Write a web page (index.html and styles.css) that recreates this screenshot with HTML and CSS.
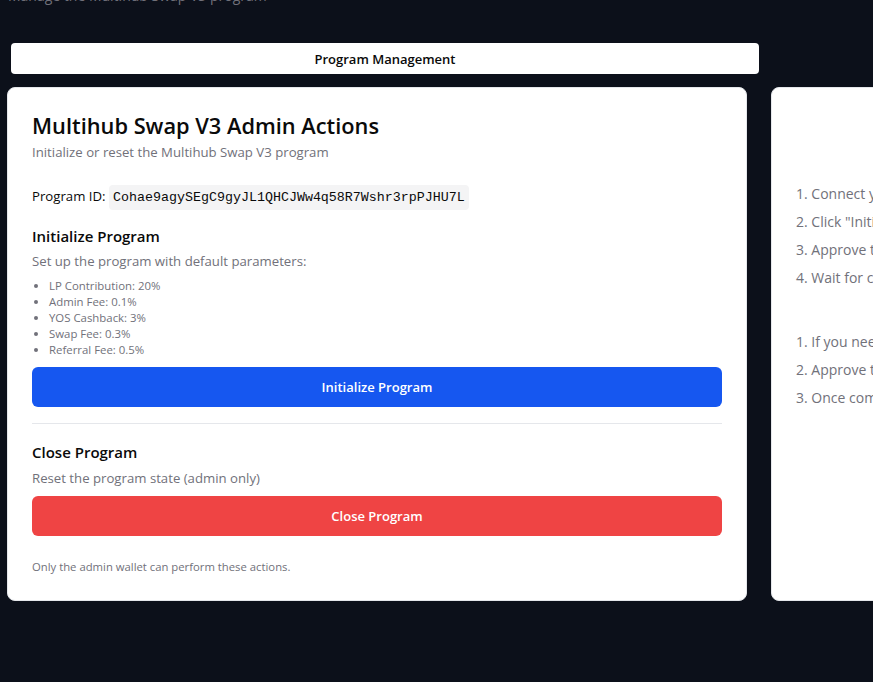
FILE: index.html
```html
<!DOCTYPE html>
<html lang="en">
<head>
<meta charset="utf-8">
<title>Multihub Swap V3 Admin</title>
<link rel="stylesheet" href="styles.css">
</head>
<body>
<div class="page">
  <p class="page-sub">Manage the Multihub Swap V3 program</p>
  <div class="tabs-list">
    <div class="tab active">Program Management</div>
  </div>
  <div class="grid">
    <section class="card">
      <h2 class="card-title">Multihub Swap V3 Admin Actions</h2>
      <p class="card-desc">Initialize or reset the Multihub Swap V3 program</p>
      <p class="pid">Program ID: <code class="code">Cohae9agySEgC9gyJL1QHCJWw4q58R7Wshr3rpPJHU7L</code></p>
      <h3 class="sec-title first">Initialize Program</h3>
      <p class="sec-desc">Set up the program with default parameters:</p>
      <ul class="params">
        <li>LP Contribution: 20%</li>
        <li>Admin Fee: 0.1%</li>
        <li>YOS Cashback: 3%</li>
        <li>Swap Fee: 0.3%</li>
        <li>Referral Fee: 0.5%</li>
      </ul>
      <button class="btn btn-blue">Initialize Program</button>
      <hr class="divider">
      <h3 class="sec-title">Close Program</h3>
      <p class="sec-desc close">Reset the program state (admin only)</p>
      <button class="btn btn-red">Close Program</button>
      <p class="foot">Only the admin wallet can perform these actions.</p>
    </section>
    <section class="card">
      <h2 class="card-title center">Instructions</h2>
      <p class="card-desc center">How to manage the program</p>
      <ol class="steps">
        <li>1. Connect your admin wallet</li>
        <li>2. Click "Initialize Program" to set up the program</li>
        <li>3. Approve the transaction in your wallet</li>
        <li>4. Wait for confirmation</li>
      </ol>
      <h4 class="steps-title">Closing the Program</h4>
      <ol class="steps next">
        <li>1. If you need to reset, click "Close Program"</li>
        <li>2. Approve the transaction in your wallet</li>
        <li>3. Once complete, you can initialize again</li>
      </ol>
    </section>
  </div>
</div>
</body>
</html>
```
FILE: styles.css
```css
* { box-sizing: border-box; }
html, body { margin: 0; padding: 0; }
body {
  background: #0c101a;
  font-family: "Open Sans", "Noto Sans", sans-serif;
  overflow: hidden;
  width: 873px;
  height: 682px;
}
.page { padding-left: 7px; width: 1600px; }
.page-sub {
  margin: -14px 0 0 1px;
  font-size: 14px;
  line-height: 20px;
  color: #71717a;
}
.tabs-list {
  margin-top: 33px;
  width: 756px;
  padding: 4px;
  display: flex;
}
.tab {
  flex: 1;
  height: 31px;
  background: #fff;
  border-radius: 4px;
  display: flex;
  align-items: center;
  justify-content: center;
  font-size: 13px;
  font-weight: 600;
  color: #0a0a0a;
}
.grid {
  margin-top: 9px;
  display: grid;
  grid-template-columns: 740px 740px;
  gap: 24px;
}
.card {
  background: #fff;
  border: 1px solid #e5e7eb;
  border-radius: 8px;
  padding: 24px;
  height: 514px;
  color: #0a0a0a;
}
.card-title {
  margin: 0;
  font-size: 21.8px;
  line-height: 27px;
  font-weight: 600;
}
.card-desc {
  margin: 3px 0 0;
  font-size: 13.2px;
  line-height: 20px;
  color: #71717a;
}
.center { text-align: center; }
.pid {
  margin: 22px 0 0;
  font-size: 13.2px;
  line-height: 25px;
}
.code {
  display: inline-block;
  font-family: "Liberation Mono", monospace;
  font-size: 13.33px;
  background: #f4f4f5;
  border-radius: 4px;
  padding: 0 4px;
  line-height: 25px;
}
.sec-title {
  margin: 16px 0 0;
  font-size: 15px;
  line-height: 24px;
  font-weight: 600;
}
.sec-title.first { margin-top: 14px; }
.sec-desc {
  margin: 3px 0 0;
  font-size: 13.2px;
  line-height: 20px;
  color: #71717a;
}
.sec-desc.close { margin-top: 4px; }
.params {
  margin: 7px 0 0;
  padding-left: 17px;
  font-size: 11.4px;
  line-height: 16px;
  color: #71717a;
}
.btn {
  display: block;
  width: 100%;
  height: 40px;
  border: 0;
  border-radius: 6px;
  color: #fff;
  font-family: inherit;
  font-size: 13px;
  font-weight: 600;
}
.btn-blue { background: #1657f0; margin-top: 9px; }
.btn-red { background: #ef4444; margin-top: 8px; }
.divider {
  margin: 16px 0 0;
  border: 0;
  border-top: 1px solid #e5e7eb;
}
.foot {
  margin: 23px 0 0;
  font-size: 11.3px;
  line-height: 16px;
  color: #71717a;
}
.steps {
  list-style: none;
  margin: 22px 0 0;
  padding: 0;
  font-size: 14px;
  line-height: 20px;
  color: #71717a;
}
.steps.next { margin-top: 0; }
.steps li + li { margin-top: 8px; }
.steps-title {
  margin: 12px 0 8px;
  text-align: center;
  font-size: 16px;
  line-height: 24px;
  font-weight: 600;
}
```
